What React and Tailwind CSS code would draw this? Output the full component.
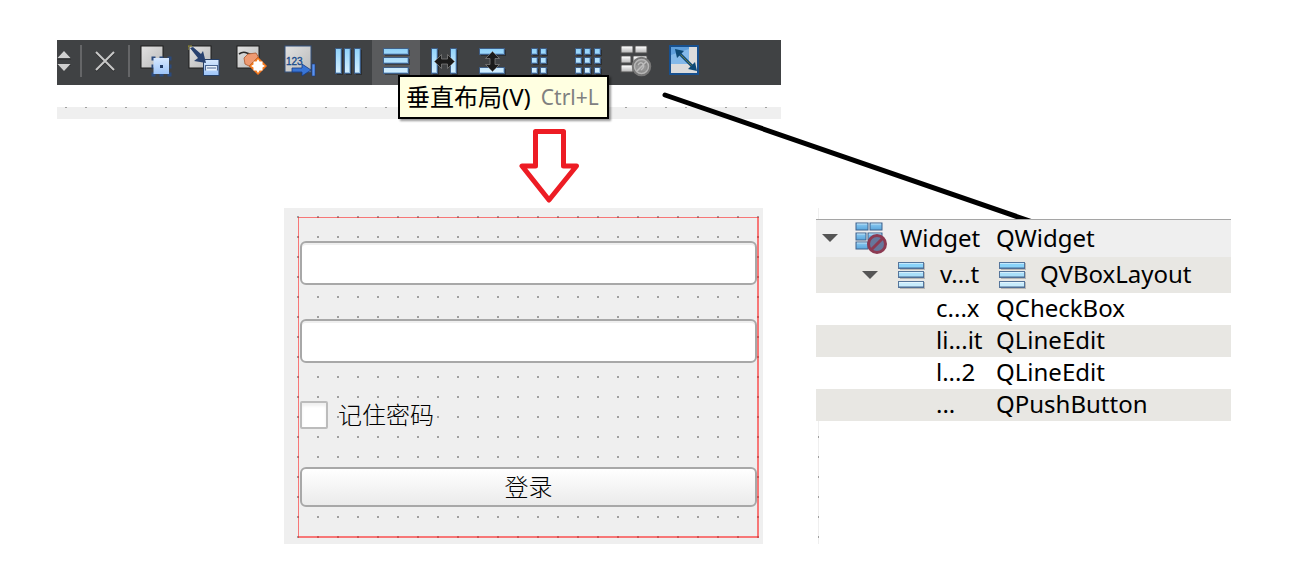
import React from "react";

const INK = "#1f3a66";

function Icon({ children }) {
  return (
    <svg viewBox="0 0 32 32" className="block h-8 w-8 shrink-0" aria-hidden="true">
      <defs>
        <linearGradient id="paper" x1="0" y1="0" x2="1" y2="1">
          <stop offset="0" stopColor="#e2e2e2" />
          <stop offset="1" stopColor="#b9b9b9" />
        </linearGradient>
        <linearGradient id="sky" x1="0" y1="0" x2="0" y2="1">
          <stop offset="0" stopColor="#d6e8ff" />
          <stop offset="1" stopColor="#9dc4f8" />
        </linearGradient>
        <linearGradient id="pale" x1="0" y1="0" x2="0" y2="32" gradientUnits="userSpaceOnUse">
          <stop offset="0.1" stopColor="#8fd2fa" />
          <stop offset="0.9" stopColor="#d8f0ff" />
        </linearGradient>
        <linearGradient id="silver" x1="0" y1="0" x2="0" y2="1">
          <stop offset="0" stopColor="#ffffff" />
          <stop offset="1" stopColor="#b5b5b5" />
        </linearGradient>
        <linearGradient id="brick" x1="0" y1="0" x2="0" y2="1">
          <stop offset="0" stopColor="#8ccbf2" />
          <stop offset="1" stopColor="#5aa6dc" />
        </linearGradient>
      </defs>
      {children}
    </svg>
  );
}

function Bar({ x, y, w, h }) {
  return (
    <g>
      <rect x={x + 1} y={y + 1} width={w} height={h} fill="#000" opacity="0.3" />
      <rect x={x - 0.5} y={y - 0.5} width={w} height={h} fill="#3f628f" stroke="#3f628f" strokeOpacity="0.8" />
      <rect x={x} y={y} width={w - 1} height={h - 1} fill="url(#pale)" />
      <path d={`M${x + w - 1.5} ${y}v${h - 1}M${x} ${y + h - 1.5}h${w - 1}`} stroke="#6fa4d0" opacity="0.6" />
    </g>
  );
}

function Sheet({ size = 22 }) {
  return <rect x="1" y="1" width={size} height={size} fill="url(#paper)" stroke="#1c1c1c" />;
}

const EditWidgets = () => (
  <Icon>
    <Sheet />
    <path
      d="M11.500 11.500h4v4h-4zM27.500 11.500h4v4h-4zM11.500 27.500h4v4h-4zM27.500 27.500h4v4h-4zM19.500 11.500h4v2h-4zM19.500 29h4v2.500h-4zM11.500 19.500h2v4h-2zM29.500 19.500h2v4h-2z"
      fill="#2b4a7d"
    />
    <rect x="13.500" y="13" width="15.500" height="16" fill="url(#sky)" />
    <rect x="20" y="20" width="3" height="3" fill={INK} />
  </Icon>
);

const EditSignals = () => (
  <Icon>
    <Sheet />
    <rect x="15.500" y="14.500" width="15.500" height="16" fill="url(#sky)" stroke="#263f66" />
    <path d="M17.500 25.500v-5h12v5" fill="#e9f3ff" stroke="#4c6792" strokeWidth="1.200" />
    <path d="M19 23h9" stroke="#4c6792" strokeWidth="1" />
    <path d="M2 3l3-1 8 7 2-3 3 12-12-2 4-3z" fill="#29426f" />
    <path d="M0 5V1h4" stroke="#a39c3a" fill="none" />
  </Icon>
);

const EditBuddies = () => (
  <Icon>
    <Sheet />
    <path d="M3 9q4-3 8-1l5 2" stroke="#2a2a2a" strokeWidth="1.600" fill="none" />
    <path d="M8 13l4-4 8-1 3 5-8 9-6-3z" fill="#ee9a72" stroke="#a8562c" strokeWidth="0.800" />
    <path d="M22 12l9 9-9 9-9-9z" fill="#f47a1c" stroke="#a8562c" strokeWidth="0.600" />
    <path d="M22 14l1.500 2.500h3v3L29 21l-2.500 1.500v3h-3L22 28l-1.500-2.500h-3v-3L15 21l2.500-1.500v-3h3z" fill="#fff" />
  </Icon>
);

const EditTabOrder = () => (
  <Icon>
    <rect x="1" y="1" width="26" height="26" fill="url(#paper)" stroke="#33507c" />
    <text x="2" y="20" fontSize="10" fontFamily="Liberation Sans, sans-serif" fill="#14498c" stroke="#14498c" strokeWidth="0.300">123</text>
    <path d="M8 23h10v-4l9 6-9 6v-4H8z" fill="#3975d6" stroke="#173a80" strokeWidth="0.800" />
    <rect x="28" y="19" width="3" height="12" fill="#5b92ee" stroke="#173a80" strokeWidth="0.600" />
  </Icon>
);

const LayHorizontal = () => (
  <Icon>
    {[4, 13, 23].map((x) => <Bar key={x} x={x} y={4} w={6} h={25} />)}
  </Icon>
);

const LayVertical = () => (
  <Icon>
    {[4, 13, 23].map((y) => <Bar key={y} x={4} y={y} w={25} h={6} />)}
  </Icon>
);

const ARROW = "M6.500 16.500l7-7v4.500h6V9.500l7 7-7 7V19h-6v4.500z";

const SplitHorizontal = () => (
  <Icon>
    <Bar x={4} y={4} w={6} h={25} />
    <Bar x={23} y={4} w={6} h={25} />
    <path d={ARROW} fill="#1b1b1b" stroke="#7c7c7c" strokeWidth="0.800" />
  </Icon>
);

const SplitVertical = () => (
  <Icon>
    <Bar x={4} y={4} w={25} h={6} />
    <Bar x={4} y={23} w={25} h={6} />
    <path d={ARROW} transform="rotate(90 16.500 16.500)" fill="#1b1b1b" stroke="#7c7c7c" strokeWidth="0.800" />
  </Icon>
);

const cells = (xs) => xs.flatMap((x) => [4, 13, 23].map((y) => <Bar key={`${x}-${y}`} x={x} y={y} w={6} h={6} />));

const LayForm = () => <Icon>{cells([8, 17])}</Icon>;
const LayGrid = () => <Icon>{cells([4, 13, 23])}</Icon>;

function Bricks({ fill, stroke }) {
  const rows = [[1, 1, 12], [15, 1, 12], [1, 11, 10], [13, 11, 14], [1, 20, 12], [15, 20, 12]];
  return rows.map(([x, y, w]) => (
    <g key={`${x}-${y}`}>
      <rect x={x} y={y} width={w} height="7" fill={fill} stroke={stroke} />
      <path d={`M${x + 1} ${y + 1}h${w - 2}`} stroke="#fff" opacity="0.5" />
    </g>
  ));
}

const BreakLayout = () => (
  <Icon>
    <Bricks fill="url(#silver)" stroke="#505050" />
    <circle cx="21.500" cy="21.500" r="8.500" fill="#8d8d8d" fillOpacity="0.900" stroke="#777" strokeWidth="2.500" />
    <circle cx="21.500" cy="21.500" r="7" fill="none" stroke="#b5b5b5" strokeWidth="1.500" />
    <path d="M17 26l9-9M18 20q3-4 5-1t-2 6" stroke="#bdbdbd" strokeWidth="1.500" fill="none" />
  </Icon>
);

const AdjustSize = () => (
  <Icon>
    <rect x="2" y="1" width="28" height="28" fill="#dcdcdc" stroke="#17508f" strokeWidth="2" />
    <rect x="3" y="2" width="18" height="17" fill="#5f9fdc" />
    <path d="M3 19V10l18-6v15z" fill="#9ccbf2" opacity="0.600" />
    <path d="M11 8l14 14" stroke="#0d4976" strokeWidth="3" />
    <path d="M12 9l12 12" stroke="#8b8a35" strokeWidth="0.800" />
    <path d="M7 4l9 2-7 7zM29 26l-9-2 7-7z" fill="#0d4976" />
  </Icon>
);

const WidgetIcon = () => (
  <Icon>
    <Bricks fill="url(#brick)" stroke="#41628c" />
    <circle cx="22" cy="22" r="8.500" fill="#66779c" stroke="#8c3a52" strokeWidth="3" />
    <path d="M16.500 27.500l11-11" stroke="#8c3a52" strokeWidth="3" />
  </Icon>
);

const LayoutIcon = () => (
  <svg viewBox="0 0 32 32" className="block h-8 w-8 shrink-0" aria-hidden="true">
    {[["#8ad4fa", 3], ["#aadff9", 12], ["#c8ecfc", 22]].map(([fill, y]) => (
      <g key={y}>
        <rect x="5" y={y + 1} width="25" height="7" fill="#000" opacity="0.200" />
        <rect x="3.500" y={y + 0.5} width="25" height="6" fill={fill} stroke="#56769c" />
        <path d={`M4 ${y + 1.5}h24`} stroke="#fff" opacity="0.500" />
        <path d={`M4 ${y + 6}h25`} stroke="#4b688f" />
      </g>
    ))}
  </svg>
);

const TOOLS = [
  ["编辑控件", EditWidgets],
  ["编辑信号/槽", EditSignals],
  ["编辑伙伴", EditBuddies],
  ["编辑Tab顺序", EditTabOrder],
  ["水平布局", LayHorizontal],
  ["垂直布局", LayVertical, true],
  ["水平分裂器布局", SplitHorizontal],
  ["垂直分裂器布局", SplitVertical],
  ["表单布局", LayForm],
  ["栅格布局", LayGrid],
  ["打破布局", BreakLayout],
  ["调整大小", AdjustSize],
];

const Separator = () => <span className="h-8 w-0.5 shrink-0 bg-[#656668]" />;

function Toolbar() {
  return (
    <section className="relative w-full max-w-[724px]">
      <div className="flex h-[45px] bg-[#404244]">
        <div className="flex items-start pt-[5px]">
          <button type="button" aria-label="切换" className="flex h-8 w-[23px] items-center">
            <svg viewBox="0 0 14 22" className="h-[22px] w-3.5" aria-hidden="true">
              <path d="M0 9h14v1H0zM0 15h14v1H0z" fill="#2b2c2d" opacity="0.600" />
              <path d="M7 1l6.500 7h-13zM7 21l6.500-7h-13z" fill="#d0d0d0" />
            </svg>
          </button>
          <Separator />
          <button type="button" aria-label="关闭" className="flex h-8 w-[46px] items-center justify-center">
            <svg viewBox="0 0 22 22" className="h-[22px] w-[22px]" aria-hidden="true">
              <path d="M2 3l18 18M20 3L2 21" stroke="#2b2c2d" strokeWidth="2" />
              <path d="M2 2l18 18M20 2L2 20" stroke="#c8c8c8" strokeWidth="2" />
            </svg>
          </button>
          <Separator />
        </div>
        <div className="ml-0.5 flex">
          {TOOLS.map(([name, Glyph, active]) => (
            <button
              key={name}
              type="button"
              aria-label={name}
              className={active ? "flex w-12 items-start justify-center bg-[#5a5b5d] pt-[5px]" : "flex w-12 items-start justify-center pt-[5px]"}
            >
              <Glyph />
            </button>
          ))}
        </div>
      </div>
      <div className="mt-[22px] h-3 bg-[#efefef]">
        <div className="h-px bg-[linear-gradient(90deg,#a0a0a0_2px,transparent_2px)] bg-[length:20px_1px] bg-[position:8px_0]" />
      </div>
      <div
        role="tooltip"
        className="absolute top-[35px] left-[341px] flex h-11 items-center gap-2.5 border-2 border-black bg-[#ffffe1] pr-2 pl-1.5 whitespace-nowrap shadow-[2px_2px_2px_rgba(0,0,0,0.4)]"
      >
        <span className="text-2xl leading-10 text-black">垂直布局(V)</span>
        <span className="text-[21px] leading-10 text-[#808080]">Ctrl+L</span>
      </div>
    </section>
  );
}

function DesignerForm() {
  const edit = "h-11 w-full rounded-md border-2 border-[#a8a8a8] bg-white px-2 text-2xl shadow-[inset_0_2px_0_#efefef] outline-none";
  return (
    <form
      onSubmit={(e) => e.preventDefault()}
      className="min-w-0 bg-[#efefef] bg-[conic-gradient(at_2px_2px,transparent_75%,#a0a0a0_0)] bg-[length:20px_20px] bg-[position:13px_8px] pt-[9px] pr-1 pb-1.5 pl-3.5"
    >
      <div className="flex flex-col gap-[34px] border-t border-r-2 border-b-2 border-l border-[rgba(255,0,0,0.5)] pt-[23px] pb-[29px] pl-px">
        <input type="text" aria-label="用户名" className={edit} />
        <input type="password" aria-label="密码" className={edit} />
        <label className="flex h-9 items-center gap-2.5 text-2xl font-light text-black">
          <input
            type="checkbox"
            className="h-7 w-7 appearance-none rounded-xs border-2 border-[#bcbcbc] bg-white shadow-[inset_0_3px_3px_#f0f0f0]"
          />
          记住密码
        </label>
        <button
          type="submit"
          className="h-10 w-full rounded-md border-2 border-[#a8a8a8] bg-linear-to-b from-white to-[#ebebeb] text-2xl leading-9 font-light text-black"
        >
          登录
        </button>
      </div>
    </form>
  );
}

const Caret = () => (
  <svg viewBox="0 0 16 8" className="h-2 w-4 shrink-0" aria-hidden="true">
    <path d="M0 0h16L8 8z" fill="#555" />
  </svg>
);

const CHILDREN = [
  ["c...x", "QCheckBox", "bg-white"],
  ["li...it", "QLineEdit", "bg-[#e8e7e3]"],
  ["l...2", "QLineEdit", "bg-white"],
  ["...", "QPushButton", "bg-[#e8e7e3]"],
];

function ObjectTree() {
  return (
    <aside className="flex min-w-0 flex-col">
      <div className="ml-0.5 h-[11px] border-l border-[#efefef]" />
      <table className="w-full table-fixed border-collapse text-left text-2xl leading-[30px] text-black">
        <colgroup>
          <col className="w-[180px]" />
          <col />
        </colgroup>
        <tbody>
          <tr className="h-[38px] bg-[#efefef] shadow-[inset_0_1px_0_#a5a5a5]">
            <td className="p-0">
              <div className="flex items-center pl-1.5">
                <Caret />
                <span className="ml-[17px]"><WidgetIcon /></span>
                <span className="ml-[13px]">Widget</span>
              </div>
            </td>
            <td className="p-0">QWidget</td>
          </tr>
          <tr className="h-9 bg-[#e8e7e3]">
            <td className="p-0">
              <div className="flex items-center pl-[46px]">
                <Caret />
                <span className="ml-[17px]"><LayoutIcon /></span>
                <span className="ml-[13px] pb-0.5">v...t</span>
              </div>
            </td>
            <td className="p-0">
              <div className="flex items-center gap-3">
                <LayoutIcon />
                <span className="pb-0.5">QVBoxLayout</span>
              </div>
            </td>
          </tr>
          {CHILDREN.map(([name, type, tone], i) => (
            <tr key={i} className={tone}>
              <td className="p-0 pb-0.5 pl-[120px]">{name}</td>
              <td className="p-0 pb-0.5">{type}</td>
            </tr>
          ))}
        </tbody>
      </table>
      <div className="ml-0.5 w-px flex-1 bg-[#efefef] bg-[linear-gradient(#a0a0a0_2px,transparent_2px)] bg-[length:1px_20px] bg-[position:0_15px]" />
    </aside>
  );
}

export default function App() {
  return (
    <main className="relative min-h-screen bg-white pt-10 pb-6 font-['Noto_Sans','Noto_Sans_CJK_SC',sans-serif]">
      <div className="pl-[57px]">
        <Toolbar />
      </div>
      <div className="flex h-[89px] pt-[9px] pl-[519px]">
        <svg viewBox="0 0 60 76" className="h-[76px] w-[60px]" aria-hidden="true">
          <path d="M16.500 3.500h28v34.500h13L30 72 3 38h13.500z" fill="none" stroke="#ed1c24" strokeWidth="5" strokeLinejoin="round" />
        </svg>
      </div>
      <div className="grid grid-cols-[479fr_415fr] gap-[53px] pr-[69px] pl-[284px]">
        <DesignerForm />
        <ObjectTree />
      </div>
      <svg viewBox="0 0 380 129" className="pointer-events-none absolute top-[90px] left-[660px] h-[129px] w-[380px] overflow-hidden" aria-hidden="true">
        <path d="M5 5l379 131" stroke="#000" strokeWidth="5" strokeLinecap="round" />
      </svg>
    </main>
  );
}
